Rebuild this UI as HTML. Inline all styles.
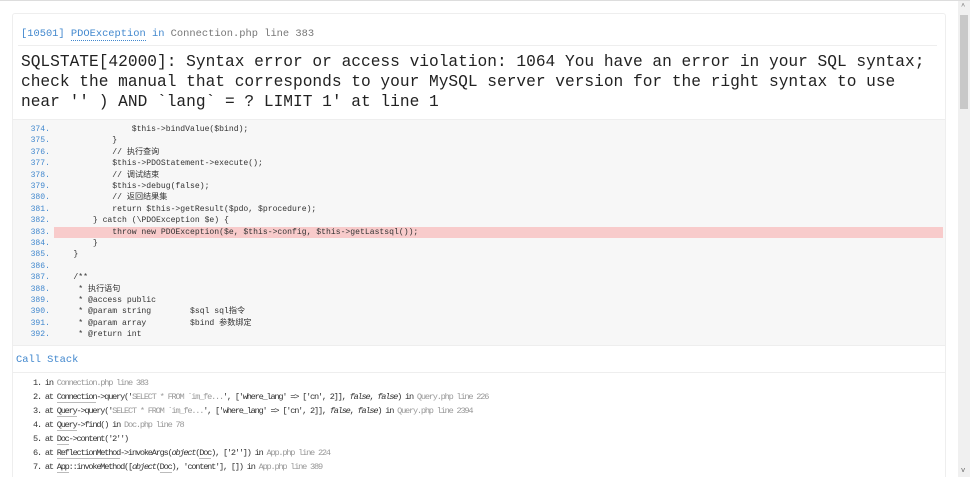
<!DOCTYPE html>
<html><head><meta charset="utf-8"><style>
html,body{margin:0;padding:0;background:#fff;width:970px;height:476px;overflow:hidden;}
body{border-top:1px solid #ddd;position:relative;font-family:"Liberation Mono","Noto Sans CJK SC",monospace;}
.sb{position:absolute;right:0;top:0;width:12px;height:476px;background:#f0f0f0;}
.sb .th{position:absolute;left:2px;top:14px;width:8px;height:94px;background:#c8c8c8;}
.sb .u{position:absolute;top:2px;left:3px;font-size:7px;color:#666;}
.sb .d{position:absolute;bottom:2px;left:3px;font-size:7px;color:#666;}
.box{position:absolute;left:12px;top:12px;width:932px;height:470px;border:1px solid #eee;border-radius:3px;}
.hd{position:absolute;left:8px;top:14px;font-size:10.4px;color:#4288ce;}
.hd u{text-decoration:none;border-bottom:1px dotted #4288ce;}
.hd span{color:#777;}
.ln1{position:absolute;left:5px;right:8px;top:31px;border-top:1px solid #eee;}
.msg{position:absolute;left:8px;top:38px;font-size:16.2px;line-height:20px;color:#222;white-space:pre;}
.code{position:absolute;left:0;right:0;top:105px;height:225px;background:#f7f7f7;border-top:1px solid #eee;border-bottom:1px solid #eee;}
.row{position:absolute;left:0;right:2px;height:11.4px;font-size:8.1px;line-height:11.4px;white-space:pre;color:#333;}
.row .n{position:absolute;left:0;width:37px;text-align:right;color:#4288ce;}
.row .c{position:absolute;left:41px;}
.row.hl{background:#f8cbcb;left:41px;}
.row.hl .n{left:-41px;}
.row.hl .c{left:0;}
.cs{position:absolute;left:3px;top:340px;font-size:10.4px;color:#4288ce;}
.ln2{position:absolute;left:0;right:0;top:358px;border-top:1px solid #eee;}
.st{position:absolute;left:20px;font-size:8.6px;letter-spacing:-1.2px;color:#333;white-space:pre;}
.st .g{color:#999;}
.st .a{border-bottom:1px solid #bbb;}
</style></head><body>
<div class="box">
<div class="hd">[10501] <u>PDOException</u> in <span>Connection.php line 383</span></div>
<div class="ln1"></div>
<div class="msg">SQLSTATE[42000]: Syntax error or access violation: 1064 You have an error in your SQL syntax;
check the manual that corresponds to your MySQL server version for the right syntax to use
near '' ) AND `lang` = ? LIMIT 1' at line 1</div>
<div class="code">
<div class="row" style="top:4px"><span class="n">374.</span><span class="c">                $this->bindValue($bind);</span></div>
<div class="row" style="top:15.4px"><span class="n">375.</span><span class="c">            }</span></div>
<div class="row" style="top:26.8px"><span class="n">376.</span><span class="c">            // 执行查询</span></div>
<div class="row" style="top:38.2px"><span class="n">377.</span><span class="c">            $this->PDOStatement->execute();</span></div>
<div class="row" style="top:49.6px"><span class="n">378.</span><span class="c">            // 调试结束</span></div>
<div class="row" style="top:61px"><span class="n">379.</span><span class="c">            $this->debug(false);</span></div>
<div class="row" style="top:72.4px"><span class="n">380.</span><span class="c">            // 返回结果集</span></div>
<div class="row" style="top:83.8px"><span class="n">381.</span><span class="c">            return $this->getResult($pdo, $procedure);</span></div>
<div class="row" style="top:95.2px"><span class="n">382.</span><span class="c">        } catch (\PDOException $e) {</span></div>
<div class="row hl" style="top:106.6px"><span class="n">383.</span><span class="c">            throw new PDOException($e, $this->config, $this->getLastsql());</span></div>
<div class="row" style="top:118px"><span class="n">384.</span><span class="c">        }</span></div>
<div class="row" style="top:129.4px"><span class="n">385.</span><span class="c">    }</span></div>
<div class="row" style="top:140.8px"><span class="n">386.</span><span class="c"></span></div>
<div class="row" style="top:152.2px"><span class="n">387.</span><span class="c">    /**</span></div>
<div class="row" style="top:163.6px"><span class="n">388.</span><span class="c">     * 执行语句</span></div>
<div class="row" style="top:175px"><span class="n">389.</span><span class="c">     * @access public</span></div>
<div class="row" style="top:186.4px"><span class="n">390.</span><span class="c">     * @param string        $sql sql指令</span></div>
<div class="row" style="top:197.8px"><span class="n">391.</span><span class="c">     * @param array         $bind 参数绑定</span></div>
<div class="row" style="top:209.2px"><span class="n">392.</span><span class="c">     * @return int</span></div>
</div>
<div class="cs">Call Stack</div>
<div class="ln2"></div>
<div class="st" style="top:364px">1. in <span class="g">Connection.php line 383</span></div>
<div class="st" style="top:378px">2. at <span class="a">Connection</span>->query('<span class="g">SELECT * FROM `im_fe...</span>', ['where_lang' => ['cn', 2]], <i>false</i>, <i>false</i>) in <span class="g">Query.php line 226</span></div>
<div class="st" style="top:392px">3. at <span class="a">Query</span>->query('<span class="g">SELECT * FROM `im_fe...</span>', ['where_lang' => ['cn', 2]], <i>false</i>, <i>false</i>) in <span class="g">Query.php line 2394</span></div>
<div class="st" style="top:406px">4. at <span class="a">Query</span>->find() in <span class="g">Doc.php line 78</span></div>
<div class="st" style="top:420px">5. at <span class="a">Doc</span>->content('2'')</div>
<div class="st" style="top:434px">6. at <span class="a">ReflectionMethod</span>->invokeArgs(<i>object</i>(<span class="a">Doc</span>), ['2'']) in <span class="g">App.php line 224</span></div>
<div class="st" style="top:448px">7. at <span class="a">App</span>::invokeMethod([<i>object</i>(<span class="a">Doc</span>), 'content'], []) in <span class="g">App.php line 389</span></div>
</div>
<div class="sb"><div class="u">^</div><div class="th"></div><div class="d">v</div></div>
</body></html>
